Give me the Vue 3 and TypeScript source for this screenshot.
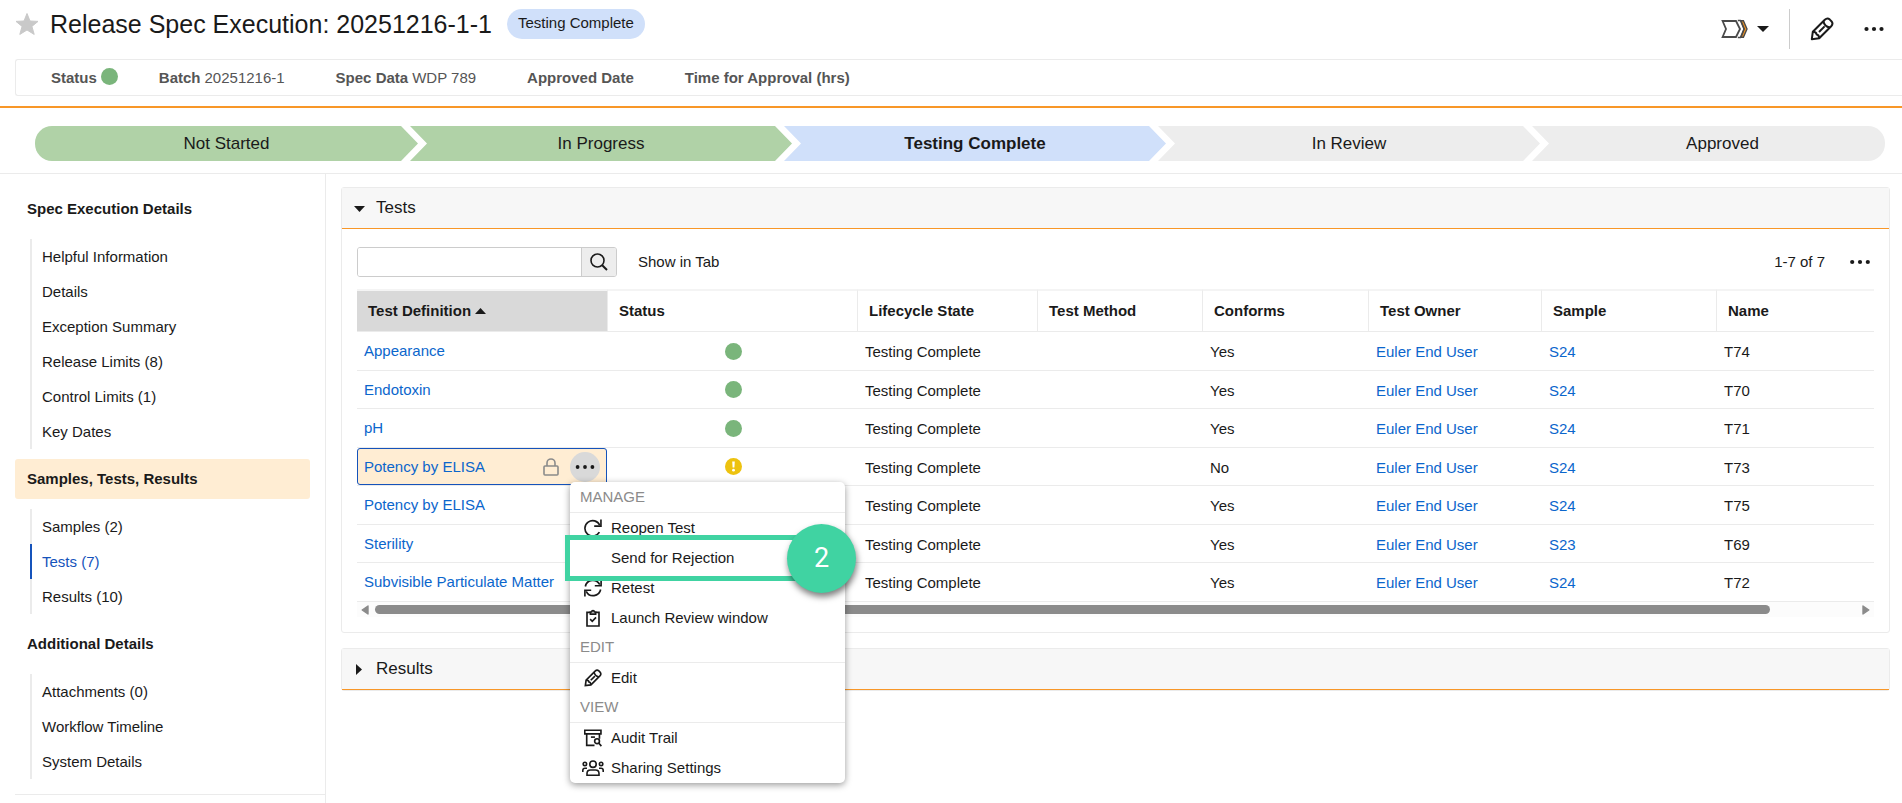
<script setup lang="ts">
import { ref } from 'vue'

interface Fact { label: string; value?: string; dot?: boolean }
interface Stage { name: string; state: 'done' | 'current' | 'todo' }
interface NavSection { title: string; active?: boolean; items: string[] }
interface TestRow {
  name: string
  ok: boolean
  conforms: string
  sample: string
  id: string
  open?: boolean
}
interface MenuEntry { label: string; icon?: string; step?: number }
interface MenuGroup { title: string; entries: MenuEntry[] }

const facts: Fact[] = [
  { label: 'Status', dot: true },
  { label: 'Batch', value: '20251216-1' },
  { label: 'Spec Data', value: 'WDP 789' },
  { label: 'Approved Date' },
  { label: 'Time for Approval (hrs)' },
]

const stages: Stage[] = [
  { name: 'Not Started', state: 'done' },
  { name: 'In Progress', state: 'done' },
  { name: 'Testing Complete', state: 'current' },
  { name: 'In Review', state: 'todo' },
  { name: 'Approved', state: 'todo' },
]

const sections: NavSection[] = [
  {
    title: 'Spec Execution Details',
    items: ['Helpful Information', 'Details', 'Exception Summary', 'Release Limits (8)', 'Control Limits (1)', 'Key Dates'],
  },
  { title: 'Samples, Tests, Results', active: true, items: ['Samples (2)', 'Tests (7)', 'Results (10)'] },
  { title: 'Additional Details', items: ['Attachments (0)', 'Workflow Timeline', 'System Details'] },
]
const currentItem = ref('Tests (7)')

const columns = ['Status', 'Lifecycle State', 'Test Method', 'Conforms', 'Test Owner', 'Sample', 'Name']

const rows: TestRow[] = [
  { name: 'Appearance', ok: true, conforms: 'Yes', sample: 'S24', id: 'T74' },
  { name: 'Endotoxin', ok: true, conforms: 'Yes', sample: 'S24', id: 'T70' },
  { name: 'pH', ok: true, conforms: 'Yes', sample: 'S24', id: 'T71' },
  { name: 'Potency by ELISA', ok: false, conforms: 'No', sample: 'S24', id: 'T73', open: true },
  { name: 'Potency by ELISA', ok: true, conforms: 'Yes', sample: 'S24', id: 'T75' },
  { name: 'Sterility', ok: true, conforms: 'Yes', sample: 'S23', id: 'T69' },
  { name: 'Subvisible Particulate Matter', ok: true, conforms: 'Yes', sample: 'S24', id: 'T72' },
]

const menu: MenuGroup[] = [
  {
    title: 'MANAGE',
    entries: [
      { label: 'Reopen Test', icon: 'reopen' },
      { label: 'Send for Rejection', step: 2 },
      { label: 'Retest', icon: 'retest' },
      { label: 'Launch Review window', icon: 'clipboard' },
    ],
  },
  { title: 'EDIT', entries: [{ label: 'Edit', icon: 'pencil' }] },
  {
    title: 'VIEW',
    entries: [
      { label: 'Audit Trail', icon: 'audit' },
      { label: 'Sharing Settings', icon: 'people' },
    ],
  },
]

/* Stroke outlines on a 24-unit grid */
const pencil = [
  'M1.8 22.2L2.8 14.8L14.8 2.8Q17.4 0.4 19.8 2.6L21.4 4.2Q23.6 6.6 21.2 9.2L9.2 21.2Z',
  'M13.4 4.2Q14.4 9.4 19.8 10.6',
  'M2.8 14.8Q6.4 15 6.6 17.4Q9 17.6 9.2 21.2',
  'M9 15L14.6 9.4',
]
const icons: Record<string, string[]> = {
  reopen: ['M20.5 17.5A10.3 10.3 0 1 1 21 8.4', 'M22.6 0.5V9.4H13.6'],
  retest: ['M1.8 10A10.2 10.2 0 0 1 21 7.6', 'M22.8 0.8V9H14.4', 'M22.2 14A10.2 10.2 0 0 1 3 16.4', 'M1.2 23.2V15H9.6'],
  clipboard: ['M8.5 4.5H4V22.6H20V4.5H15.5', 'M8.5 4H10.2A1.8 1.8 0 0 1 13.8 4H15.5V6.8H8.5Z', 'M8.2 13.6L11 16.4L16 11.2'],
  pencil,
  audit: ['M1 1.6H22.6V6.4H1Z', 'M3.6 6.4V21.8H14', 'M20.6 6.4V13', 'M9.2 10.8H14.6', 'M20.6 16.2A3.2 3.2 0 1 1 14.2 16.2A3.2 3.2 0 1 1 20.6 16.2Z', 'M19.6 18.6L23.2 22.8'],
}
</script>

<template>
  <div class="page">
    <header class="top">
      <div class="title-row">
        <button class="plain star" aria-label="Favorite">
          <svg width="24" height="24" viewBox="0 0 24 24"><path d="M12 1.5L15 9L23 9.4L16.9 14.4L19.2 22.4L12 18L4.8 22.4L7.1 14.4L1 9.4L9 9Z" fill="#c9c9c9" stroke="#c9c9c9" stroke-linejoin="round" /></svg>
        </button>
        <h1>Release Spec Execution: 20251216-1-1</h1>
        <span class="badge">Testing Complete</span>
        <div class="actions">
          <button class="plain flow-btn" aria-label="Workflow actions">
            <svg width="27" height="20" viewBox="0 0 27 20" fill="none" stroke="#4a4a4a" stroke-width="1.8">
              <path d="M1.6 2H15L19 10L15 18H1.6L5 10Z" />
              <path d="M20 1.8H22.4L26 10L22.4 18.2H20L23.2 10Z" fill="#f7941d" stroke-width="1.4" />
              <path d="M16.8 1.5H19.4L23 10L19.4 18.5H16.8" stroke-width="1.4" />
            </svg>
            <svg width="12" height="6" viewBox="0 0 12 6"><path d="M0 0H12L6 6Z" fill="#1a1a1a" /></svg>
          </button>
          <span class="divider"></span>
          <button class="plain" aria-label="Edit">
            <svg width="24" height="24" viewBox="0 0 24 24" fill="none" stroke="#1a1a1a" stroke-width="2" stroke-linejoin="round">
              <path v-for="d in pencil" :key="d" :d="d" />
            </svg>
          </button>
          <button class="plain" aria-label="More actions">
            <svg width="20" height="6" viewBox="0 0 20 6" fill="#1a1a1a"><circle cx="2.5" cy="3" r="2.1" /><circle cx="10" cy="3" r="2.1" /><circle cx="17.5" cy="3" r="2.1" /></svg>
          </button>
        </div>
      </div>
      <div class="facts">
        <div v-for="f in facts" :key="f.label" class="fact" :class="{ first: f.dot }">
          <b>{{ f.label }}</b>
          <span v-if="f.dot" class="dot"></span>
          <span v-if="f.value">{{ f.value }}</span>
        </div>
      </div>
    </header>

    <ol class="stages">
      <li v-for="s in stages" :key="s.name" :class="s.state">{{ s.name }}</li>
    </ol>

    <div class="body">
      <nav class="side">
        <div class="side-inner">
          <template v-for="sec in sections" :key="sec.title">
            <h2 :class="{ active: sec.active }">{{ sec.title }}</h2>
            <ul>
              <li v-for="item in sec.items" :key="item" :class="{ current: item === currentItem }">
                <a href="#" @click.prevent="currentItem = item">{{ item }}</a>
              </li>
            </ul>
          </template>
        </div>
      </nav>

      <main>
        <section class="panel">
          <h2 class="panel-head">
            <button class="plain">
              <svg width="11" height="11" viewBox="0 0 11 11"><path d="M0 3H11L5.5 9Z" fill="#1a1a1a" /></svg>
              Tests
            </button>
          </h2>
          <div class="panel-body">
            <div class="toolbar">
              <form class="search" @submit.prevent>
                <input type="text" aria-label="Search tests" />
                <button aria-label="Search">
                  <svg width="18" height="18" viewBox="0 0 18 18" fill="none" stroke="#1a1a1a"><circle cx="7.5" cy="7.5" r="6.5" stroke-width="1.6" /><path d="M12.2 12.2L17 17" stroke-width="2" /></svg>
                </button>
              </form>
              <a href="#" class="show">Show in Tab</a>
              <span class="count">1-7 of 7</span>
              <button class="plain" aria-label="Table actions">
                <svg width="20" height="6" viewBox="0 0 20 6" fill="#1a1a1a"><circle cx="2.2" cy="3" r="2.1" /><circle cx="10" cy="3" r="2.1" /><circle cx="17.8" cy="3" r="2.1" /></svg>
              </button>
            </div>

            <table>
              <colgroup>
                <col class="c-def" /><col class="c-status" /><col class="c-life" /><col class="c-method" />
                <col class="c-conf" /><col class="c-owner" /><col class="c-sample" /><col />
              </colgroup>
              <thead>
                <tr>
                  <th class="sorted">Test Definition <svg width="11" height="6" viewBox="0 0 11 6"><path d="M0 6H11L5.5 0Z" fill="#1a1a1a" /></svg></th>
                  <th v-for="c in columns" :key="c">{{ c }}</th>
                </tr>
              </thead>
              <tbody>
                <tr v-for="r in rows" :key="r.id">
                  <td class="def">
                    <div class="def-cell" :class="{ open: r.open }">
                      <a href="#">{{ r.name }}</a>
                      <template v-if="r.open">
                        <svg class="lock" width="16" height="18" viewBox="0 0 16 18" fill="none" stroke="#8b8b8b" stroke-width="1.6"><rect x="1" y="8" width="14" height="9" rx="1" /><path d="M4 8V5A4 4 0 0 1 12 5V8" /></svg>
                        <button class="row-more" aria-label="Row actions">
                          <svg width="20" height="6" viewBox="0 0 20 6" fill="#1a1a1a"><circle cx="2.6" cy="3" r="1.9" /><circle cx="10" cy="3" r="1.9" /><circle cx="17.4" cy="3" r="1.9" /></svg>
                        </button>
                      </template>
                    </div>
                    <div v-if="r.open" class="menu">
                      <section v-for="g in menu" :key="g.title">
                        <h3>{{ g.title }}</h3>
                        <div v-for="e in g.entries" :key="e.label" class="entry">
                          <button>
                            <span class="glyph">
                              <svg v-if="e.icon === 'people'" width="22" height="16" viewBox="0 0 22 16" fill="none" stroke="#1a1a1a" stroke-width="1.6">
                                <circle cx="11" cy="4.2" r="3.2" /><path d="M5 15.2V13.5Q5 10 8.5 10H13.5Q17 10 17 13.5V15.2Z" />
                                <circle cx="2.9" cy="3.9" r="1.7" /><circle cx="19.1" cy="3.9" r="1.7" />
                                <path d="M0.8 12V10.5Q0.8 8.3 3 8.3H5" /><path d="M21.2 12V10.5Q21.2 8.3 19 8.3H17" />
                              </svg>
                              <svg v-else-if="e.icon" width="18" height="18" viewBox="0 0 24 24" fill="none" stroke="#1a1a1a" stroke-width="2.2">
                                <path v-for="d in icons[e.icon]" :key="d" :d="d" />
                              </svg>
                            </span>
                            {{ e.label }}
                          </button>
                          <template v-if="e.step">
                            <span class="mark"></span>
                            <span class="step">{{ e.step }}</span>
                          </template>
                        </div>
                      </section>
                    </div>
                  </td>
                  <td class="status">
                    <span v-if="r.ok" class="dot"></span>
                    <svg v-else width="17" height="17" viewBox="0 0 17 17"><circle cx="8.5" cy="8.5" r="8.5" fill="#edc20f" /><path d="M7.2 3.6H9.8L9.4 9.6H7.6Z" fill="#fff" /><circle cx="8.5" cy="12.2" r="1.4" fill="#fff" /></svg>
                  </td>
                  <td>Testing Complete</td>
                  <td></td>
                  <td>{{ r.conforms }}</td>
                  <td><a href="#">Euler End User</a></td>
                  <td><a href="#">{{ r.sample }}</a></td>
                  <td>{{ r.id }}</td>
                </tr>
              </tbody>
            </table>
            <div class="hbar">
              <svg width="8" height="10" viewBox="0 0 8 10"><path d="M7 1V9L1.2 5Z" fill="#8b8b8b" stroke="#8b8b8b" stroke-width="1.4" stroke-linejoin="round" /></svg>
              <div class="track"><div class="thumb"></div></div>
              <svg width="8" height="10" viewBox="0 0 8 10"><path d="M1 1V9L6.8 5Z" fill="#8b8b8b" stroke="#8b8b8b" stroke-width="1.4" stroke-linejoin="round" /></svg>
            </div>
          </div>
        </section>

        <section class="panel">
          <h2 class="panel-head">
            <button class="plain">
              <svg width="11" height="11" viewBox="0 0 11 11"><path d="M2 0V11L8 5.5Z" fill="#1a1a1a" /></svg>
              Results
            </button>
          </h2>
        </section>
      </main>
    </div>
  </div>
</template>

<style>
body {
  background: #fff;
}
</style>

<style scoped>
* {
  box-sizing: border-box;
}
.page {
  min-height: 100vh;
  display: flex;
  flex-direction: column;
  font: 15px/20px "Liberation Sans", Arial, sans-serif;
  color: #1a1a1a;
}
h1, h2, h3, ul, ol {
  margin: 0;
  padding: 0;
  list-style: none;
}
a {
  color: #0b66cc;
  text-decoration: none;
}
button, input {
  font: inherit;
  color: inherit;
}
svg {
  display: block;
  flex: none;
}
.plain {
  display: flex;
  align-items: center;
  padding: 0;
  border: 0;
  background: none;
}
.dot {
  display: block;
  width: 17px;
  height: 17px;
  border-radius: 50%;
  background: #7ab57b;
}

.top {
  border-bottom: 2px solid #f89728;
  padding-bottom: 10px;
}
.title-row {
  display: flex;
  align-items: flex-start;
  height: 59px;
  padding: 9px 18px 0 15px;
}
.star {
  height: 30px;
  margin-right: 11px;
}
h1 {
  font-size: 25px;
  line-height: 30px;
  font-weight: 400;
  white-space: nowrap;
}
.badge {
  margin-left: 15px;
  padding: 4px 11px 6px;
  border-radius: 15px;
  background: #d0e0fa;
  white-space: nowrap;
}
.actions {
  display: flex;
  align-items: center;
  gap: 20px;
  height: 40px;
  margin-left: auto;
}
.actions .plain:last-child {
  margin-left: 10px;
}
.flow-btn {
  gap: 9px;
}
.divider {
  width: 1px;
  height: 40px;
  background: #ccc;
}
.facts {
  display: flex;
  align-items: center;
  gap: 51px;
  height: 37px;
  margin-left: 15px;
  padding-left: 35px;
  border: 1px solid #ebebeb;
  border-right: 0;
  border-radius: 3px 0 0 3px;
  color: #555;
}
.fact {
  display: flex;
  gap: 4px;
  white-space: nowrap;
}
.fact.first {
  margin-right: -10px;
}

.stages {
  display: grid;
  grid-template-columns: repeat(4, 187fr) 177fr;
  padding: 18px 17px 12px 35px;
  border-bottom: 1px solid #ebebeb;
}
.stages li {
  height: 35px;
  margin-right: -9px;
  font-size: 17px;
  line-height: 35px;
  text-align: center;
  background: #ededed;
  clip-path: polygon(0 0, calc(100% - 17px) 0, 100% 50%, calc(100% - 17px) 100%, 0 100%, 17px 50%);
}
.stages li + li {
  margin-left: 1px;
}
.stages li:first-child {
  border-radius: 17px 0 0 17px;
  clip-path: polygon(0 0, calc(100% - 17px) 0, 100% 50%, calc(100% - 17px) 100%, 0 100%);
}
.stages li:last-child {
  margin-right: 0;
  padding-left: 28px;
  border-radius: 0 17px 17px 0;
  clip-path: polygon(0 0, 100% 0, 100% 100%, 0 100%, 17px 50%);
}
.stages .done {
  background: #b0d2a7;
}
.stages .current {
  background: #d0e0fa;
  font-weight: 700;
}

.body {
  flex: 1;
  display: flex;
}
.side {
  flex: none;
  width: 326px;
  padding: 15px 0 0 15px;
  border-right: 1px solid #ebebeb;
}
.side-inner {
  padding-bottom: 5px;
  border-bottom: 1px solid #ebebeb;
}
.side h2 {
  margin-right: 15px;
  padding: 10px 12px;
  border-radius: 3px;
  font-size: 15px;
  line-height: 20px;
}
.side h2.active {
  background: #ffedd3;
}
.side ul {
  margin: 10px 15px;
}
.side ul + h2 {
  margin-top: 10px;
}
.side li {
  border-left: 2px solid #ebebeb;
  padding-left: 10px;
  line-height: 35px;
}
.side li a {
  display: block;
  color: inherit;
}
.side li.current {
  border-color: #1553bb;
  color: #1553bb;
}

main {
  flex: 1;
  min-width: 0;
  display: flex;
  flex-direction: column;
  gap: 15px;
  padding: 13px 12px 0 15px;
}
.panel {
  border: 1px solid #ebebeb;
  border-radius: 3px;
}
.panel-head {
  height: 41px;
  border-bottom: 1px solid #f89728;
  background: #f7f7f7;
  font-size: 17px;
  font-weight: 400;
}
.panel-head .plain {
  gap: 11px;
  height: 40px;
  padding-left: 12px;
}
.panel-body {
  padding: 18px 15px 15px;
}
.toolbar {
  display: flex;
  align-items: center;
  margin-bottom: 12px;
}
.toolbar .plain {
  margin-right: 4px;
}
.search {
  display: flex;
  width: 260px;
  height: 30px;
  border: 1px solid #ccc;
  border-radius: 3px;
  overflow: hidden;
}
.search input {
  flex: 1;
  min-width: 0;
  padding: 0 8px;
  border: 0;
  outline: 0;
  background: #fff;
}
.search button {
  display: flex;
  align-items: center;
  justify-content: center;
  width: 35px;
  padding: 0;
  border: 0;
  border-left: 1px solid #ccc;
  background: #ededed;
}
.show {
  margin-left: 21px;
  color: inherit;
}
.count {
  margin-left: auto;
  margin-right: 25px;
}

table {
  width: 100%;
  table-layout: fixed;
  border-collapse: separate;
  border-spacing: 0;
}
.c-def { width: 251px; }
.c-status { width: 250px; }
.c-life { width: 180px; }
.c-method { width: 165px; }
.c-conf { width: 166px; }
.c-owner { width: 173px; }
.c-sample { width: 175px; }
th {
  height: 43px;
  padding: 0 12px 0 11px;
  border: solid #ebebeb;
  border-width: 2px 1px 1px 0;
  border-top-color: #f4f4f4;
  text-align: left;
  white-space: nowrap;
}
th:last-child {
  border-right-width: 0;
}
th svg {
  display: inline-block;
  vertical-align: 2px;
}
.sorted {
  background: #d9d9d9;
}
td {
  height: 39px;
  padding: 2px 8px 0 7px;
  border-bottom: 1px solid #ebebeb;
  white-space: nowrap;
}
tr:nth-child(even) td {
  height: 38px;
}
td.def {
  position: relative;
  padding: 0 1px 0 0;
}
.def-cell {
  display: flex;
  align-items: center;
  padding: 0 6px 0 7px;
}
.def-cell.open {
  height: 37px;
  padding-left: 6px;
  border: 1px solid #1553bb;
  border-radius: 3px;
  background: #ffedd3;
}
.lock {
  margin-left: auto;
}
.row-more {
  display: flex;
  align-items: center;
  justify-content: center;
  width: 30px;
  height: 30px;
  margin-left: 11px;
  padding: 0;
  border: 0;
  border-radius: 50%;
  background: #d9d9d9;
}
td.status {
  padding: 0 8px;
}
.status .dot,
.status svg {
  margin: 0 auto;
}

.hbar {
  display: flex;
  align-items: center;
  gap: 6px;
  height: 15px;
  padding: 0 4px;
  background: #fcfcfc;
}
.track {
  flex: 1;
}
.thumb {
  width: calc(100% - 86px);
  height: 9px;
  border-radius: 5px;
  background: #8b8b8b;
}

.menu {
  position: absolute;
  z-index: 5;
  top: 34px;
  left: 213px;
  width: 275px;
  padding-top: 1px;
  border-radius: 5px;
  background: #fff;
  box-shadow: 0 2px 7px rgba(0, 0, 0, 0.4);
}
.menu h3 {
  height: 30px;
  padding-left: 10px;
  border-bottom: 1px solid #ebebeb;
  font-size: 15px;
  line-height: 28px;
  font-weight: 400;
  color: #8b8b8b;
}
.entry {
  position: relative;
}
.entry button {
  display: flex;
  align-items: center;
  gap: 6px;
  width: 100%;
  height: 30px;
  padding: 0 10px 0 10px;
  border: 0;
  background: none;
}
.glyph {
  display: flex;
  justify-content: center;
  width: 25px;
}
.mark {
  position: absolute;
  inset: -8px 20px -8px -5px;
  border: 5px solid #40d3a2;
}
.step {
  position: absolute;
  top: -19px;
  right: -11px;
  width: 69px;
  height: 69px;
  border-radius: 50%;
  background: #40d3a2;
  box-shadow: 1px 4px 6px rgba(0, 0, 0, 0.5);
  color: #fff;
  font: 27px/69px Roboto, sans-serif;
  text-align: center;
}
.entry:has(.step) {
  z-index: 1;
}
</style>
